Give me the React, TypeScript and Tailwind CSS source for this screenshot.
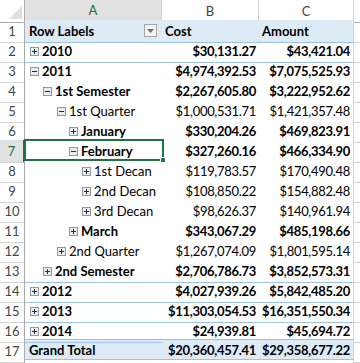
import React from 'react';

type Row = {
    label: string;
    level: number;
    toggle: '+' | '-';
    bold: boolean;
    cost: string;
    amount: string;
};

const rows: Row[] = [
    { label: '2010', level: 0, toggle: '+', bold: true, cost: '$30,131.27', amount: '$43,421.04' },
    { label: '2011', level: 0, toggle: '-', bold: true, cost: '$4,974,392.53', amount: '$7,075,525.93' },
    { label: '1st Semester', level: 1, toggle: '-', bold: true, cost: '$2,267,605.80', amount: '$3,222,952.62' },
    { label: '1st Quarter', level: 2, toggle: '-', bold: false, cost: '$1,000,531.71', amount: '$1,421,357.48' },
    { label: 'January', level: 3, toggle: '+', bold: true, cost: '$330,204.26', amount: '$469,823.91' },
    { label: 'February', level: 3, toggle: '-', bold: true, cost: '$327,260.16', amount: '$466,334.90' },
    { label: '1st Decan', level: 4, toggle: '+', bold: false, cost: '$119,783.57', amount: '$170,490.48' },
    { label: '2nd Decan', level: 4, toggle: '+', bold: false, cost: '$108,850.22', amount: '$154,882.48' },
    { label: '3rd Decan', level: 4, toggle: '+', bold: false, cost: '$98,626.37', amount: '$140,961.94' },
    { label: 'March', level: 3, toggle: '+', bold: true, cost: '$343,067.29', amount: '$485,198.66' },
    { label: '2nd Quarter', level: 2, toggle: '+', bold: false, cost: '$1,267,074.09', amount: '$1,801,595.14' },
    { label: '2nd Semester', level: 1, toggle: '+', bold: true, cost: '$2,706,786.73', amount: '$3,852,573.31' },
    { label: '2012', level: 0, toggle: '+', bold: true, cost: '$4,027,939.26', amount: '$5,842,485.20' },
    { label: '2013', level: 0, toggle: '+', bold: true, cost: '$11,303,054.53', amount: '$16,351,550.34' },
    { label: '2014', level: 0, toggle: '+', bold: true, cost: '$24,939.81', amount: '$45,694.72' },
];

// 缩进：每级 13px
const indent = ['pl-[5px]', 'pl-[18px]', 'pl-[32px]', 'pl-[44px]', 'pl-[57px]'];

const grid = 'grid grid-cols-[25px_137px_97px_95px_1fr] h-5';

// 展开/折叠小方块
const Toggle: React.FC<{ kind: '+' | '-' }> = ({ kind }) => (
    <svg width="9" height="9" viewBox="0 0 9 9" className="shrink-0">
        <rect x="0.5" y="0.5" width="8" height="8" fill="#e9ecf0" stroke="#8e99a8" />
        <path d="M2 4.5h5" stroke="#2b2b2b" />
        {kind === '+' && <path d="M4.5 2v5" stroke="#2b2b2b" />}
    </svg>
);

const RowNum: React.FC<{ n: number; active?: boolean }> = ({ n, active }) => (
    <div
        className={`flex items-center justify-center pt-[2px] border-b border-b-[#d4d4d4] ${active ? 'bg-[#e1e1e1] text-[#217346] border-r-2 border-r-[#217346]' : 'text-[#444] border-r border-r-[#ababab]'}`}
    >
        {n}
    </div>
);

export default function App() {
    return (
        <div className="w-[360px] h-[363px] overflow-hidden bg-white text-[13px] text-black select-none" style={{ fontFamily: 'Lato, "Open Sans", sans-serif' }}>
            {/* 列标题 */}
            <div className={grid}>
                <div className="relative border-r border-b border-[#ababab] bg-white">
                    <svg className="absolute right-[2px] bottom-[3px]" width="13" height="13" viewBox="0 0 13 13">
                        <path d="M13 0V13H0Z" fill="#dfdfdf" />
                    </svg>
                </div>
                <div className="flex items-center justify-center pt-px bg-[#e1e1e1] text-[#217346] border-b-2 border-b-[#217346] border-r border-r-[#d4d4d4]">A</div>
                <div className="flex items-center justify-center pt-px text-[#444] border-b border-b-[#ababab] border-r border-r-[#d4d4d4]">B</div>
                <div className="flex items-center justify-center pt-px text-[#444] border-b border-b-[#ababab] border-r border-r-[#d4d4d4]">C</div>
                <div className="border-b border-b-[#ababab]" />
            </div>

            {/* 第 1 行：透视表标题 */}
            <div className={grid}>
                <RowNum n={1} />
                <div className="flex items-center justify-between pl-[4px] pr-[5px] pt-[2px] bg-[#ddebf7] border-b border-b-[#9bc2e6] font-bold">
                    <span>Row Labels</span>
                    <span className="w-[13px] h-[13px] -mt-[2px] border border-[#a6a6a6] bg-[#f4f4f4] flex items-center justify-center">
                        <svg width="7" height="4" viewBox="0 0 7 4"><path d="M0 0h7L3.5 4Z" fill="#6b6b6b" /></svg>
                    </span>
                </div>
                <div className="flex items-center pl-[3px] pt-[2px] bg-[#ddebf7] border-b border-b-[#9bc2e6] font-bold">Cost</div>
                <div className="flex items-center pl-[3px] pt-[2px] bg-[#ddebf7] border-b border-b-[#9bc2e6] border-r border-r-[#d4d4d4] font-bold">Amount</div>
                <div className="border-b border-b-[#d4d4d4]" />
            </div>

            {/* 数据行 */}
            {rows.map((r, i) => {
                const n = i + 2;
                const blue = n === 2 || n >= 13;
                const line = blue ? 'border-b-[#9bc2e6]' : 'border-b-white';
                const weight = r.bold ? 'font-bold' : '';
                const active = n === 7;
                return (
                    <div key={n} className={grid}>
                        <RowNum n={n} active={active} />
                        <div className={`relative flex items-center gap-[3px] pt-[2px] border-b ${line} ${indent[r.level]} ${weight}`}>
                            <Toggle kind={r.toggle} />
                            <span className="whitespace-nowrap">{r.label}</span>
                            {active && (
                                <div className="absolute -left-px -top-px w-[140px] h-[22px] border-2 border-[#217346] z-10">
                                    <div className="absolute -right-[4px] -bottom-[4px] w-[6px] h-[6px] bg-[#217346] border border-white" />
                                </div>
                            )}
                        </div>
                        <div className={`flex items-center justify-end pr-[3px] pt-[2px] tracking-[-0.3px] border-b ${line} ${weight}`}>
                            <span className="whitespace-nowrap">{r.cost}</span>
                        </div>
                        <div className={`flex items-center justify-end pr-[3px] pt-[2px] tracking-[-0.3px] border-b ${line} border-r border-r-[#d4d4d4] ${weight}`}>
                            <span className="whitespace-nowrap">{r.amount}</span>
                        </div>
                        <div className="border-b border-b-[#d4d4d4]" />
                    </div>
                );
            })}

            {/* 第 17 行：总计 */}
            <div className={grid}>
                <RowNum n={17} />
                <div className="flex items-center pl-[4px] pt-[2px] bg-[#ddebf7] border-t border-t-[#9bc2e6] -mt-px h-[21px] border-b border-b-[#9bc2e6] font-bold">Grand Total</div>
                <div className="flex items-center justify-end pr-[3px] pt-[2px] tracking-[-0.3px] bg-[#ddebf7] border-t border-t-[#9bc2e6] -mt-px h-[21px] border-b border-b-[#9bc2e6] font-bold whitespace-nowrap">$20,360,457.41</div>
                <div className="flex items-center justify-end pr-[3px] pt-[2px] tracking-[-0.3px] bg-[#ddebf7] border-t border-t-[#9bc2e6] -mt-px h-[21px] border-b border-b-[#9bc2e6] border-r border-r-[#d4d4d4] font-bold whitespace-nowrap">$29,358,677.22</div>
                <div className="border-b border-b-[#d4d4d4]" />
            </div>
            <div className={grid}>
                <div className="border-r border-r-[#ababab]" />
                <div />
                <div />
                <div className="border-r border-r-[#d4d4d4]" />
                <div />
            </div>
        </div>
    );
}
